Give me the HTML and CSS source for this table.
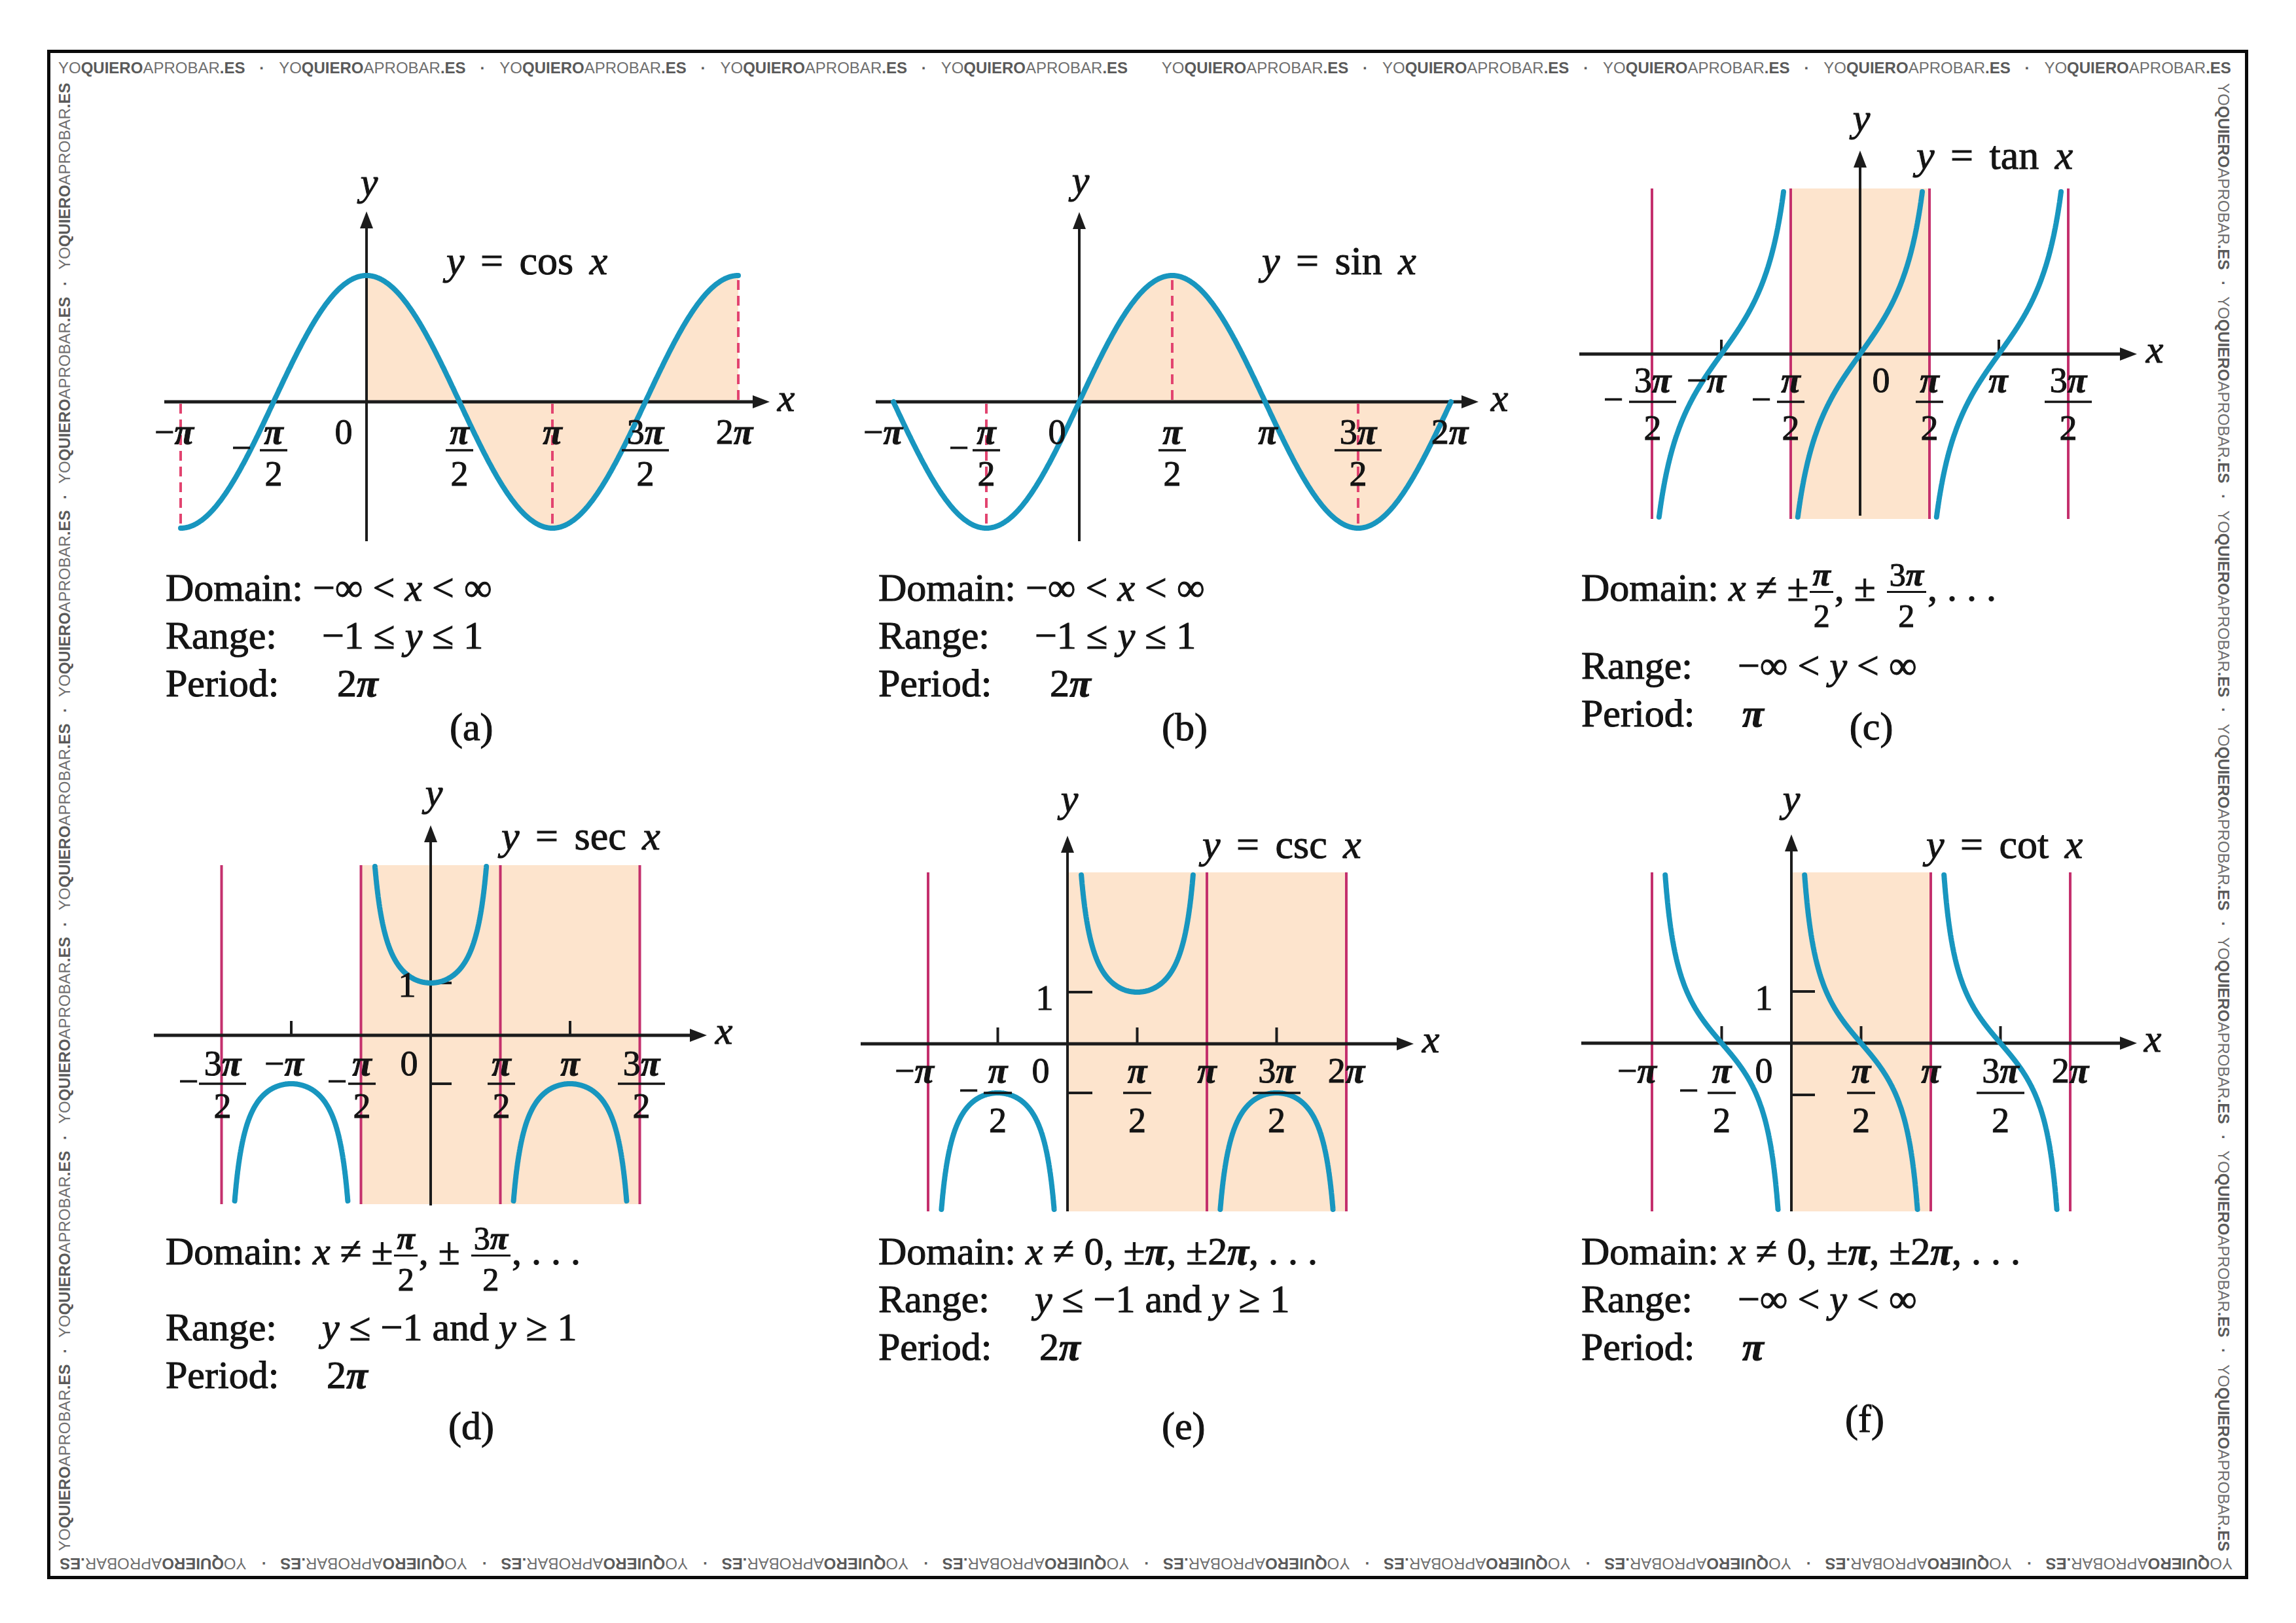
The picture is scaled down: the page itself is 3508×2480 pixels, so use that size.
FILE: index.html
```html
<!DOCTYPE html>
<html lang="es">
<head>
<meta charset="utf-8">
<title>Funciones trigonométricas</title>
<link rel="stylesheet" href="styles.css">
</head>
<body>
<div class="frame">
  <div class="wmbar wm-top">
    <span class="wm">YO<b>QUIERO</b>APROBAR<b>.ES</b></span><span class="dot">·</span>
    <span class="wm">YO<b>QUIERO</b>APROBAR<b>.ES</b></span><span class="dot">·</span>
    <span class="wm">YO<b>QUIERO</b>APROBAR<b>.ES</b></span><span class="dot">·</span>
    <span class="wm">YO<b>QUIERO</b>APROBAR<b>.ES</b></span><span class="dot">·</span>
    <span class="wm">YO<b>QUIERO</b>APROBAR<b>.ES</b></span><span class="dot"></span>
    <span class="wm">YO<b>QUIERO</b>APROBAR<b>.ES</b></span><span class="dot">·</span>
    <span class="wm">YO<b>QUIERO</b>APROBAR<b>.ES</b></span><span class="dot">·</span>
    <span class="wm">YO<b>QUIERO</b>APROBAR<b>.ES</b></span><span class="dot">·</span>
    <span class="wm">YO<b>QUIERO</b>APROBAR<b>.ES</b></span><span class="dot">·</span>
    <span class="wm">YO<b>QUIERO</b>APROBAR<b>.ES</b></span>
  </div>

  <div class="wmbar wm-left">
    <span class="wm">YO<b>QUIERO</b>APROBAR<b>.ES</b></span><span class="dot">·</span>
    <span class="wm">YO<b>QUIERO</b>APROBAR<b>.ES</b></span><span class="dot">·</span>
    <span class="wm">YO<b>QUIERO</b>APROBAR<b>.ES</b></span><span class="dot">·</span>
    <span class="wm">YO<b>QUIERO</b>APROBAR<b>.ES</b></span><span class="dot">·</span>
    <span class="wm">YO<b>QUIERO</b>APROBAR<b>.ES</b></span><span class="dot">·</span>
    <span class="wm">YO<b>QUIERO</b>APROBAR<b>.ES</b></span><span class="dot">·</span>
    <span class="wm">YO<b>QUIERO</b>APROBAR<b>.ES</b></span>
  </div>

  <main class="panels">
    <!-- (a) cos -->
    <section class="panel">
      <svg class="graph" width="1089" height="712" viewBox="0 0 1089 712">
        <path class="area" data-area="1" data-f="cos" data-x0="360" data-y0="464" data-px="90.4" data-u="193" data-a="0" data-b="6.28319"/>
        <line class="dash" x1="76" y1="467" x2="76" y2="657"/>
        <line class="dash" x1="644" y1="467" x2="644" y2="657"/>
        <line class="dash" x1="928" y1="461" x2="928" y2="271"/>
        <line class="axis" x1="51" y1="464" x2="954" y2="464"/>
        <polygon class="head" points="976,464 950,454 950,474"/>
        <line class="axis yax" x1="360" y1="677" x2="360" y2="195"/>
        <polygon class="head" points="360,173 350,199 370,199"/>
        <path class="curve" data-f="cos" data-x0="360" data-y0="464" data-px="90.4" data-u="193" data-a="-3.14159" data-b="6.28319"/>
        <text class="var" x="364" y="148">y</text>
        <text class="var" x="1001" y="478">x</text>
        <text class="title" x="482" y="269"><tspan class="it">y</tspan> = cos <tspan class="it">x</tspan></text>
        <text class="lab" x="66" y="528">−<tspan class="pi">π</tspan></text>
        <text class="lab" x="169" y="552">−</text>
        <text class="lab" x="218" y="528"><tspan class="pi">π</tspan></text>
        <line class="bar" x1="197" y1="538" x2="239" y2="538"/>
        <text class="lab" x="218" y="592">2</text>
        <text class="lab" x="325" y="528">0</text>
        <text class="lab" x="502" y="528"><tspan class="pi">π</tspan></text>
        <line class="bar" x1="481" y1="538" x2="523" y2="538"/>
        <text class="lab" x="502" y="592">2</text>
        <text class="lab" x="644" y="528"><tspan class="pi">π</tspan></text>
        <text class="lab" x="786" y="528">3<tspan class="pi">π</tspan></text>
        <line class="bar" x1="750" y1="538" x2="822" y2="538"/>
        <text class="lab" x="786" y="592">2</text>
        <text class="lab" x="922" y="528">2<tspan class="pi">π</tspan></text>
      </svg>
      <div class="caption">
        <div class="row"><span class="lbl-d">Domain:</span> −∞ &lt; <i>x</i> &lt; ∞</div>
        <div class="row"><span class="lbl">Range:</span>−1 ≤ <i>y</i> ≤ 1</div>
        <div class="row"><span class="lbl lbl-p1">Period:</span>2<b class="pi">π</b></div>
        <div class="row tag tag-a">(a)</div>
      </div>
    </section>

    <!-- (b) sin -->
    <section class="panel">
      <svg class="graph" width="1074" height="712" viewBox="0 0 1074 712">
        <path class="area" data-area="1" data-f="sin" data-x0="360" data-y0="464" data-px="90.4" data-u="193" data-a="0" data-b="6.28319"/>
        <line class="dash" x1="218" y1="467" x2="218" y2="657"/>
        <line class="dash" x1="502" y1="461" x2="502" y2="271"/>
        <line class="dash" x1="786" y1="467" x2="786" y2="657"/>
        <line class="axis" x1="49" y1="464" x2="948" y2="464"/>
        <polygon class="head" points="970,464 944,454 944,474"/>
        <line class="axis yax" x1="360" y1="677" x2="360" y2="196"/>
        <polygon class="head" points="360,174 350,200 370,200"/>
        <path class="curve" data-f="sin" data-x0="360" data-y0="464" data-px="90.4" data-u="193" data-a="-3.14159" data-b="6.28319"/>
        <text class="var" x="362" y="145">y</text>
        <text class="var" x="1002" y="478">x</text>
        <text class="title" x="639" y="269"><tspan class="it">y</tspan> = sin <tspan class="it">x</tspan></text>
        <text class="lab" x="60" y="528">−<tspan class="pi">π</tspan></text>
        <text class="lab" x="176" y="552">−</text>
        <text class="lab" x="218" y="528"><tspan class="pi">π</tspan></text>
        <line class="bar" x1="197" y1="538" x2="239" y2="538"/>
        <text class="lab" x="218" y="592">2</text>
        <text class="lab" x="326" y="528">0</text>
        <text class="lab" x="502" y="528"><tspan class="pi">π</tspan></text>
        <line class="bar" x1="481" y1="538" x2="523" y2="538"/>
        <text class="lab" x="502" y="592">2</text>
        <text class="lab" x="648" y="528"><tspan class="pi">π</tspan></text>
        <text class="lab" x="786" y="528">3<tspan class="pi">π</tspan></text>
        <line class="bar" x1="750" y1="538" x2="822" y2="538"/>
        <text class="lab" x="786" y="592">2</text>
        <text class="lab" x="926" y="528">2<tspan class="pi">π</tspan></text>
      </svg>
      <div class="caption">
        <div class="row"><span class="lbl-d">Domain:</span> −∞ &lt; <i>x</i> &lt; ∞</div>
        <div class="row"><span class="lbl">Range:</span>−1 ≤ <i>y</i> ≤ 1</div>
        <div class="row"><span class="lbl lbl-p1">Period:</span>2<b class="pi">π</b></div>
        <div class="row tag tag-b">(b)</div>
      </div>
    </section>

    <!-- (c) tan -->
    <section class="panel">
      <svg class="graph" width="1000" height="712" viewBox="0 0 1000 712">
        <rect class="shade" x="373" y="138" width="212" height="505"/>
        <line class="asym" x1="161" y1="138" x2="161" y2="643"/>
        <line class="asym" x1="373" y1="138" x2="373" y2="643"/>
        <line class="asym" x1="585" y1="138" x2="585" y2="643"/>
        <line class="asym" x1="797" y1="138" x2="797" y2="643"/>
        <line class="axis" x1="50" y1="391" x2="880" y2="391"/>
        <polygon class="head" points="902,391 876,381 876,401"/>
        <line class="tick" x1="267" y1="369" x2="267" y2="391"/>
        <line class="tick" x1="691" y1="369" x2="691" y2="391"/>
        <line class="axis yax" x1="479" y1="638" x2="479" y2="102"/>
        <polygon class="head" points="479,80 469,106 489,106"/>
        <path class="curve" data-f="tan" data-k="0.8" data-x0="479" data-y0="391" data-px="67.48" data-u="118" data-ymin="143" data-ymax="640" data-a="-4.7114" data-b="-1.5718"/>
        <path class="curve" data-f="tan" data-k="0.8" data-x0="479" data-y0="391" data-px="67.48" data-u="118" data-ymin="143" data-ymax="640" data-a="-1.5698" data-b="1.5698"/>
        <path class="curve" data-f="tan" data-k="0.8" data-x0="479" data-y0="391" data-px="67.48" data-u="118" data-ymin="143" data-ymax="640" data-a="1.5718" data-b="4.7114"/>
        <text class="var" x="481" y="50">y</text>
        <text class="var" x="929" y="404">x</text>
        <text class="title" x="565" y="108"><tspan class="it">y</tspan> = tan <tspan class="it">x</tspan></text>
        <text class="lab" x="102" y="478">−</text>
        <text class="lab" x="162" y="449">3<tspan class="pi">π</tspan></text>
        <line class="bar" x1="126" y1="464" x2="198" y2="464"/>
        <text class="lab" x="162" y="522">2</text>
        <text class="lab" x="244" y="449">−<tspan class="pi">π</tspan></text>
        <text class="lab" x="328" y="478">−</text>
        <text class="lab" x="373" y="449"><tspan class="pi">π</tspan></text>
        <line class="bar" x1="352" y1="464" x2="394" y2="464"/>
        <text class="lab" x="373" y="522">2</text>
        <text class="lab" x="511" y="449">0</text>
        <text class="lab" x="585" y="449"><tspan class="pi">π</tspan></text>
        <line class="bar" x1="564" y1="464" x2="606" y2="464"/>
        <text class="lab" x="585" y="522">2</text>
        <text class="lab" x="690" y="449"><tspan class="pi">π</tspan></text>
        <text class="lab" x="797" y="449">3<tspan class="pi">π</tspan></text>
        <line class="bar" x1="761" y1="464" x2="833" y2="464"/>
        <text class="lab" x="797" y="522">2</text>
      </svg>
      <div class="caption">
        <div class="row row-frac-c"><span class="lbl-d">Domain:</span> <i>x</i> ≠ ±<span class="frac"><span class="num"><b class="pi">π</b></span><span class="den">2</span></span>, ± <span class="frac"><span class="num">3<b class="pi">π</b></span><span class="den">2</span></span>, . . .</div>
        <div class="row"><span class="lbl">Range:</span>−∞ &lt; <i>y</i> &lt; ∞</div>
        <div class="row"><span class="lbl lbl-p2">Period:</span><b class="pi">π</b><span class="tag-c">(c)</span></div>
      </div>
    </section>

    <!-- (d) sec -->
    <section class="panel">
      <svg class="graph" width="1089" height="686" viewBox="0 0 1089 686">
        <rect class="shade" x="352" y="132" width="426" height="518"/>
        <line class="asym" x1="138.5" y1="132" x2="138.5" y2="650"/>
        <line class="asym" x1="351.5" y1="132" x2="351.5" y2="650"/>
        <line class="asym" x1="564.5" y1="132" x2="564.5" y2="650"/>
        <line class="asym" x1="777.5" y1="132" x2="777.5" y2="650"/>
        <line class="axis" x1="35" y1="392" x2="858" y2="392"/>
        <polygon class="head" points="880,392 854,382 854,402"/>
        <line class="tick" x1="245" y1="370" x2="245" y2="392"/>
        <line class="tick" x1="671" y1="370" x2="671" y2="392"/>
        <line class="tick" x1="458" y1="312" x2="490" y2="312"/>
        <line class="tick" x1="458" y1="466" x2="490" y2="466"/>
        <line class="axis yax" x1="458" y1="652" x2="458" y2="93"/>
        <polygon class="head" points="458,71 448,97 468,97"/>
        <path class="curve" data-f="sec" data-x0="458" data-y0="392" data-px="67.8" data-u="80" data-ymin="134" data-ymax="392" data-a="-1.5698" data-b="1.5698"/>
        <path class="curve" data-f="sec" data-x0="458" data-y0="392" data-px="67.8" data-u="74" data-ymin="392" data-ymax="645" data-a="-4.7114" data-b="-1.5718"/>
        <path class="curve" data-f="sec" data-x0="458" data-y0="392" data-px="67.8" data-u="74" data-ymin="392" data-ymax="645" data-a="1.5718" data-b="4.7114"/>
        <text class="var" x="463" y="41">y</text>
        <text class="var" x="906" y="405">x</text>
        <text class="title" x="566" y="108"><tspan class="it">y</tspan> = sec <tspan class="it">x</tspan></text>
        <text class="lab" x="422" y="333">1</text>
        <text class="lab" x="88" y="480">−</text>
        <text class="lab" x="140" y="453">3<tspan class="pi">π</tspan></text>
        <line class="bar" x1="104" y1="466" x2="176" y2="466"/>
        <text class="lab" x="140" y="518">2</text>
        <text class="lab" x="234" y="453">−<tspan class="pi">π</tspan></text>
        <text class="lab" x="315" y="480">−</text>
        <text class="lab" x="353" y="453"><tspan class="pi">π</tspan></text>
        <line class="bar" x1="332" y1="466" x2="374" y2="466"/>
        <text class="lab" x="353" y="518">2</text>
        <text class="lab" x="425" y="453">0</text>
        <text class="lab" x="566" y="453"><tspan class="pi">π</tspan></text>
        <line class="bar" x1="545" y1="466" x2="587" y2="466"/>
        <text class="lab" x="566" y="518">2</text>
        <text class="lab" x="671" y="453"><tspan class="pi">π</tspan></text>
        <text class="lab" x="780" y="453">3<tspan class="pi">π</tspan></text>
        <line class="bar" x1="744" y1="466" x2="816" y2="466"/>
        <text class="lab" x="780" y="518">2</text>
      </svg>
      <div class="caption">
        <div class="row row-frac-d"><span class="lbl-d">Domain:</span> <i>x</i> ≠ ±<span class="frac"><span class="num"><b class="pi">π</b></span><span class="den">2</span></span>, ± <span class="frac"><span class="num">3<b class="pi">π</b></span><span class="den">2</span></span>, . . .</div>
        <div class="row"><span class="lbl">Range:</span><i>y</i> ≤ −1 and <i>y</i> ≥ 1</div>
        <div class="row"><span class="lbl lbl-p2">Period:</span>2<b class="pi">π</b></div>
        <div class="row tag tag-d">(d)</div>
      </div>
    </section>

    <!-- (e) csc -->
    <section class="panel">
      <svg class="graph" width="1074" height="686" viewBox="0 0 1074 686">
        <rect class="shade" x="342" y="143" width="426" height="518"/>
        <line class="asym" x1="129" y1="143" x2="129" y2="661"/>
        <line class="asym" x1="555" y1="143" x2="555" y2="661"/>
        <line class="asym" x1="768" y1="143" x2="768" y2="661"/>
        <line class="axis" x1="26" y1="405" x2="849" y2="405"/>
        <polygon class="head" points="871,405 845,395 845,415"/>
        <line class="tick" x1="235.5" y1="380" x2="235.5" y2="405"/>
        <line class="tick" x1="448.5" y1="380" x2="448.5" y2="405"/>
        <line class="tick" x1="661.5" y1="380" x2="661.5" y2="405"/>
        <line class="tick" x1="342" y1="326" x2="380" y2="326"/>
        <line class="tick" x1="342" y1="480" x2="380" y2="480"/>
        <line class="axis yax" x1="342" y1="661" x2="342" y2="109"/>
        <polygon class="head" points="342,87 332,113 352,113"/>
        <path class="curve" data-f="csc" data-x0="342" data-y0="405" data-px="67.8" data-u="79" data-ymin="147" data-ymax="405" data-a="0.001" data-b="3.1406"/>
        <path class="curve" data-f="csc" data-x0="342" data-y0="405" data-px="67.8" data-u="75" data-ymin="405" data-ymax="658" data-a="-3.1406" data-b="-0.001"/>
        <path class="curve" data-f="csc" data-x0="342" data-y0="405" data-px="67.8" data-u="75" data-ymin="405" data-ymax="658" data-a="3.1426" data-b="6.2822"/>
        <text class="var" x="345" y="50">y</text>
        <text class="var" x="897" y="418">x</text>
        <text class="title" x="548" y="121"><tspan class="it">y</tspan> = csc <tspan class="it">x</tspan></text>
        <text class="lab" x="307" y="353">1</text>
        <text class="lab" x="108" y="464">−<tspan class="pi">π</tspan></text>
        <text class="lab" x="191" y="494">−</text>
        <text class="lab" x="235.5" y="464"><tspan class="pi">π</tspan></text>
        <line class="bar" x1="214" y1="480" x2="257" y2="480"/>
        <text class="lab" x="235.5" y="540">2</text>
        <text class="lab" x="301" y="464">0</text>
        <text class="lab" x="448.5" y="464"><tspan class="pi">π</tspan></text>
        <line class="bar" x1="427" y1="480" x2="470" y2="480"/>
        <text class="lab" x="448.5" y="540">2</text>
        <text class="lab" x="555" y="464"><tspan class="pi">π</tspan></text>
        <text class="lab" x="661.5" y="464">3<tspan class="pi">π</tspan></text>
        <line class="bar" x1="625" y1="480" x2="698" y2="480"/>
        <text class="lab" x="661.5" y="540">2</text>
        <text class="lab" x="768" y="464">2<tspan class="pi">π</tspan></text>
      </svg>
      <div class="caption">
        <div class="row"><span class="lbl-d">Domain:</span> <i>x</i> ≠ 0, ±<b class="pi">π</b>, ±2<b class="pi">π</b>, . . .</div>
        <div class="row"><span class="lbl">Range:</span><i>y</i> ≤ −1 and <i>y</i> ≥ 1</div>
        <div class="row"><span class="lbl lbl-p2">Period:</span>2<b class="pi">π</b></div>
        <div class="row tag tag-e">(e)</div>
      </div>
    </section>

    <!-- (f) cot -->
    <section class="panel">
      <svg class="graph" width="1000" height="686" viewBox="0 0 1000 686">
        <rect class="shade" x="374" y="143" width="213" height="518"/>
        <line class="asym" x1="161" y1="143" x2="161" y2="661"/>
        <line class="asym" x1="587" y1="143" x2="587" y2="661"/>
        <line class="asym" x1="800" y1="143" x2="800" y2="661"/>
        <line class="axis" x1="53" y1="404" x2="880" y2="404"/>
        <polygon class="head" points="902,404 876,394 876,414"/>
        <line class="tick" x1="267.5" y1="378" x2="267.5" y2="404"/>
        <line class="tick" x1="480.5" y1="378" x2="480.5" y2="404"/>
        <line class="tick" x1="693.5" y1="378" x2="693.5" y2="404"/>
        <line class="tick" x1="374" y1="325" x2="410" y2="325"/>
        <line class="tick" x1="374" y1="483" x2="410" y2="483"/>
        <line class="axis yax" x1="374" y1="661" x2="374" y2="107"/>
        <polygon class="head" points="374,85 364,111 384,111"/>
        <path class="curve" data-f="cot" data-x0="374" data-y0="404" data-px="67.8" data-u="79" data-ymin="147" data-ymax="658" data-a="-3.1406" data-b="-0.001"/>
        <path class="curve" data-f="cot" data-x0="374" data-y0="404" data-px="67.8" data-u="79" data-ymin="147" data-ymax="658" data-a="0.001" data-b="3.1406"/>
        <path class="curve" data-f="cot" data-x0="374" data-y0="404" data-px="67.8" data-u="79" data-ymin="147" data-ymax="658" data-a="3.1426" data-b="6.2822"/>
        <text class="var" x="374" y="50">y</text>
        <text class="var" x="926" y="417">x</text>
        <text class="title" x="580" y="121"><tspan class="it">y</tspan> = cot <tspan class="it">x</tspan></text>
        <text class="lab" x="332" y="353">1</text>
        <text class="lab" x="138" y="464">−<tspan class="pi">π</tspan></text>
        <text class="lab" x="217" y="494">−</text>
        <text class="lab" x="267.5" y="464"><tspan class="pi">π</tspan></text>
        <line class="bar" x1="246" y1="480" x2="289" y2="480"/>
        <text class="lab" x="267.5" y="540">2</text>
        <text class="lab" x="332" y="464">0</text>
        <text class="lab" x="480.5" y="464"><tspan class="pi">π</tspan></text>
        <line class="bar" x1="459" y1="480" x2="502" y2="480"/>
        <text class="lab" x="480.5" y="540">2</text>
        <text class="lab" x="587" y="464"><tspan class="pi">π</tspan></text>
        <text class="lab" x="693.5" y="464">3<tspan class="pi">π</tspan></text>
        <line class="bar" x1="657" y1="480" x2="730" y2="480"/>
        <text class="lab" x="693.5" y="540">2</text>
        <text class="lab" x="800" y="464">2<tspan class="pi">π</tspan></text>
      </svg>
      <div class="caption">
        <div class="row"><span class="lbl-d">Domain:</span> <i>x</i> ≠ 0, ±<b class="pi">π</b>, ±2<b class="pi">π</b>, . . .</div>
        <div class="row"><span class="lbl">Range:</span>−∞ &lt; <i>y</i> &lt; ∞</div>
        <div class="row"><span class="lbl lbl-p2">Period:</span><b class="pi">π</b></div>
        <div class="row tag tag-f">(f)</div>
      </div>
    </section>
  </main>

  <div class="wmbar wm-right">
    <span class="wm">YO<b>QUIERO</b>APROBAR<b>.ES</b></span><span class="dot">·</span>
    <span class="wm">YO<b>QUIERO</b>APROBAR<b>.ES</b></span><span class="dot">·</span>
    <span class="wm">YO<b>QUIERO</b>APROBAR<b>.ES</b></span><span class="dot">·</span>
    <span class="wm">YO<b>QUIERO</b>APROBAR<b>.ES</b></span><span class="dot">·</span>
    <span class="wm">YO<b>QUIERO</b>APROBAR<b>.ES</b></span><span class="dot">·</span>
    <span class="wm">YO<b>QUIERO</b>APROBAR<b>.ES</b></span><span class="dot">·</span>
    <span class="wm">YO<b>QUIERO</b>APROBAR<b>.ES</b></span>
  </div>

  <div class="wmbar wm-bottom">
    <span class="wm">YO<b>QUIERO</b>APROBAR<b>.ES</b></span><span class="dot">·</span>
    <span class="wm">YO<b>QUIERO</b>APROBAR<b>.ES</b></span><span class="dot">·</span>
    <span class="wm">YO<b>QUIERO</b>APROBAR<b>.ES</b></span><span class="dot">·</span>
    <span class="wm">YO<b>QUIERO</b>APROBAR<b>.ES</b></span><span class="dot">·</span>
    <span class="wm">YO<b>QUIERO</b>APROBAR<b>.ES</b></span><span class="dot">·</span>
    <span class="wm">YO<b>QUIERO</b>APROBAR<b>.ES</b></span><span class="dot">·</span>
    <span class="wm">YO<b>QUIERO</b>APROBAR<b>.ES</b></span><span class="dot">·</span>
    <span class="wm">YO<b>QUIERO</b>APROBAR<b>.ES</b></span><span class="dot">·</span>
    <span class="wm">YO<b>QUIERO</b>APROBAR<b>.ES</b></span><span class="dot">·</span>
    <span class="wm">YO<b>QUIERO</b>APROBAR<b>.ES</b></span>
  </div>
</div>
<script src="script.js"></script>
</body>
</html>
```

FILE: styles.css
```css
* { box-sizing: border-box; }
html, body { margin: 0; padding: 0; background: #ffffff; }
body {
  width: 3508px;
  height: 2480px;
  overflow: hidden;
  font-family: "Liberation Serif", "Times New Roman", serif;
  color: #141414;
}

.frame {
  margin: 76px 0 0 72px;
  width: 3363px;
  height: 2337px;
  border: 5px solid #0a0a0a;
  display: grid;
  grid-template-columns: 44px 1fr 66px;
  grid-template-rows: 46px 1fr 38px;
}

/* watermark bands */
.wmbar {
  font-family: "Liberation Sans", Arial, sans-serif;
  font-size: 24px;
  line-height: 1;
  color: #6f6f6f;
  white-space: nowrap;
  display: flex;
  justify-content: space-between;
  align-items: center;
  overflow: hidden;
}
.wmbar b { font-weight: 700; color: #5a5a5a; }
.dot {
  display: inline-block;
  inline-size: 8px;
  text-align: center;
  font-weight: 700;
  color: #5f5f5f;
}
.wm-top { grid-column: 1 / 4; grid-row: 1; padding: 0 21px 0 12px; }
.wm-bottom { grid-column: 1 / 4; grid-row: 3; padding: 0 14px 0 19px; transform: rotate(180deg); }
.wm-left { grid-column: 1; grid-row: 2; writing-mode: vertical-rl; transform: rotate(180deg); }
.wm-right { grid-column: 3; grid-row: 2; writing-mode: vertical-rl; }

/* panels */
.panels {
  grid-column: 2;
  grid-row: 2;
  display: grid;
  grid-template-columns: 1089px 1074px 1000px;
  grid-template-rows: 1040px 1fr;
  padding: 23px 0 0 79px;
}
.panel { display: flex; flex-direction: column; }
.graph { display: block; flex: none; overflow: visible; }

/* captions */
.caption {
  padding-left: 53px;
  font-size: 60px;
  -webkit-text-stroke: 1.1px #141414;
}
.row { height: 73px; line-height: 73px; white-space: nowrap; }
.row i { font-style: italic; }
.pi { font-weight: 700; font-style: italic; }
.lbl { display: inline-block; width: 239px; }
.lbl-p1 { width: 262px; }
.lbl-p2 { width: 246px; }
.row-frac-c { margin-bottom: 46px; }
.row-frac-d { margin-bottom: 43px; }
.frac {
  display: inline-flex;
  flex-direction: column;
  align-items: center;
  vertical-align: middle;
  font-size: 50px;
  line-height: 50px;
  margin: -50px 2px;
}
.num { padding: 10px 4px 0; border-bottom: 3px solid #141414; }
.den { padding-top: 10px; }
.tag { display: block; }
.tag-a { padding-left: 434px; margin-top: -6px; }
.tag-b { padding-left: 433px; margin-top: -6px; }
.tag-d { padding-left: 432px; margin-top: 5px; }
.tag-e { padding-left: 433px; margin-top: 48px; }
.tag-f { padding-left: 403px; margin-top: 37px; }
.tag-c { display: inline-block; margin-left: 131px; vertical-align: -20px; }

/* graph drawing */
.graph text {
  font-family: "Liberation Serif", "Times New Roman", serif;
  font-size: 54px;
  fill: #141414;
  stroke: #141414;
  stroke-width: 1px;
}
.graph .lab { text-anchor: middle; }
.graph .var { text-anchor: middle; font-style: italic; font-size: 60px; }
.graph .title { font-size: 62px; word-spacing: 9px; }
.graph .it { font-style: italic; }
.graph .pi { font-weight: 700; font-style: italic; }

.axis { stroke: #1c1c1c; stroke-width: 5; }
.yax { stroke-width: 4; }
.head { fill: #1c1c1c; }
.tick { stroke: #1c1c1c; stroke-width: 4; }
.bar { stroke: #141414; stroke-width: 3.5; }
.asym { stroke: #c4306d; stroke-width: 4; }
.dash { stroke: #e24470; stroke-width: 4; stroke-dasharray: 15 9; }
.curve {
  fill: none;
  stroke: #1896bf;
  stroke-width: 8;
  stroke-linecap: round;
  stroke-linejoin: round;
}
.area, .shade { fill: #fde4cd; stroke: none; }
```

FILE: script.js
```js
(function () {
  var PI = Math.PI;
  function red(t, off) { var s = t - off; return s - PI * Math.round(s / PI); }
  var F = {
    cos: function (t) { return Math.cos(t); },
    sin: function (t) { return Math.sin(t); },
    tan: function (t, k) { return Math.tan(k * red(t, 0)); },
    cot: function (t, k) { return -Math.tan(k * red(t, PI / 2)); },
    sec: function (t) { return 1 / Math.cos(t); },
    csc: function (t) { return 1 / Math.sin(t); }
  };
  var paths = document.querySelectorAll('path[data-f]');
  for (var i = 0; i < paths.length; i++) {
    draw(paths[i]);
  }
  function draw(p) {
    var d = p.dataset;
    var f = F[d.f], x0 = +d.x0, y0 = +d.y0, px = +d.px, u = +d.u, a = +d.a, b = +d.b;
    var k = d.k ? +d.k : 1;
    var ymin = d.ymin !== undefined ? +d.ymin : -1e9;
    var ymax = d.ymax !== undefined ? +d.ymax : 1e9;
    function Y(t) { return y0 - u * f(t, k); }
    function ins(y) { return isFinite(y) && y >= ymin && y <= ymax; }
    var N = 1200, pts = [], prevIn = null, prevT = 0;
    for (var j = 0; j <= N; j++) {
      var t = a + (b - a) * j / N, y = Y(t), inn = ins(y);
      if (prevIn !== null && inn !== prevIn) {
        var lo = prevT, hi = t;
        for (var m = 0; m < 50; m++) {
          var mid = (lo + hi) / 2;
          if (ins(Y(mid)) === prevIn) lo = mid; else hi = mid;
        }
        var tb = prevIn ? lo : hi;
        var yb = Math.min(Math.max(Y(tb), ymin), ymax);
        pts.push([tb, yb]);
      }
      if (inn) pts.push([t, y]);
      prevIn = inn; prevT = t;
    }
    var s = pts.map(function (q) { return (x0 + px * q[0]).toFixed(1) + ',' + q[1].toFixed(1); });
    var dd;
    if (d.area) {
      dd = 'M' + (x0 + px * a).toFixed(1) + ',' + y0 + ' L' + s.join(' L') + ' L' + (x0 + px * b).toFixed(1) + ',' + y0 + ' Z';
    } else {
      dd = 'M' + s.join(' L');
    }
    p.setAttribute('d', dd);
  }
})();
```
